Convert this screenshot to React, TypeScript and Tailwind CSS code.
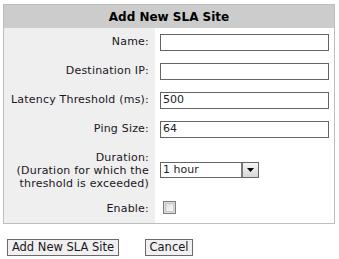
import React from 'react';

const rows = [
  { label: 'Name:', value: '' },
  { label: 'Destination IP:', value: '' },
  { label: 'Latency Threshold (ms):', value: '500' },
  { label: 'Ping Size:', value: '64' },
];

const font = { fontFamily: 'Tahoma, "DejaVu Sans", sans-serif' };

export default function App() {
  return (
    <div className="w-[339px] h-[259px] bg-white pl-[3px] pt-[4px] text-[11px] text-[#1c1424]" style={font}>
      <div className="w-[332px] border border-[#bdbdbd]">
        <div className="h-[23px] bg-[#cccccc] flex items-center justify-center font-bold text-[12px] text-black">
          Add New SLA Site
        </div>
        <div className="grid grid-cols-[151px_1fr]">
          {rows.map((r) => (
            <React.Fragment key={r.label}>
              <div className="h-[29px] bg-[#efefef] flex items-center justify-end pr-[6px] tracking-[0.2px]">{r.label}</div>
              <div className="h-[29px] flex items-center pl-[5px]">
                <div className="w-[169px] h-[17px] border border-[#646464] bg-white flex items-center pl-[2px] text-[#1c1c2c]">
                  {r.value}
                </div>
              </div>
            </React.Fragment>
          ))}
          <div className="h-[52px] bg-[#efefef] flex flex-col items-end justify-center pr-[6px] leading-[13px] text-right tracking-[0.2px]">
            <span>Duration:</span>
            <span>(Duration for which the</span>
            <span>threshold is exceeded)</span>
          </div>
          <div className="h-[52px] flex items-center pl-[5px]">
            <div className="w-[99px] h-[16px] border border-[#646464] bg-white flex items-center">
              <span className="flex-1 pl-[2px] text-[#1c1c2c]">1 hour</span>
              <div className="w-[17px] h-full border-l-2 border-[#7a7a7a] bg-gradient-to-b from-[#f4f4f4] to-[#d8d8d8] flex items-center justify-center">
                <svg width="7" height="4" viewBox="0 0 7 4"><path d="M0 0h7L3.5 4z" fill="#000" /></svg>
              </div>
            </div>
          </div>
          <div className="h-[27px] bg-[#efefef] flex items-start pt-[5px] justify-end pr-[6px] tracking-[0.2px]">Enable:</div>
          <div className="h-[27px] flex items-start pt-[5px] pl-[8px]">
            <div className="w-[13px] h-[13px] border border-[#7c7c7c] p-[1px] bg-[#dcdcdc]">
              <div className="w-full h-full bg-gradient-to-br from-[#dcdcdc] to-[#fbfbfb] border border-[#c8c8c8]" />
            </div>
          </div>
        </div>
      </div>
      <div className="flex gap-[26px] pl-[4px] pt-[15px]">
        <button className="h-[17px] w-[112px] border border-[#6a6a6a] bg-[#f0f0f0] text-[11.5px] leading-[15px] text-[#1c1424]">Add New SLA Site</button>
        <button className="h-[17px] w-[48px] border border-[#6a6a6a] bg-[#f0f0f0] text-[11.5px] leading-[15px] text-[#1c1424]">Cancel</button>
      </div>
    </div>
  );
}
